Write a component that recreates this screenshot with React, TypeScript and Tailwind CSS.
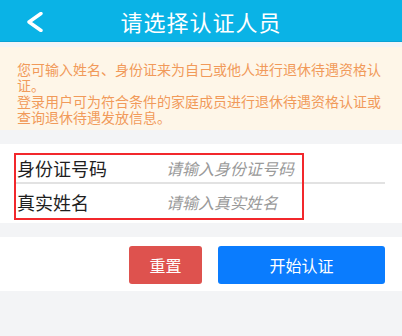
import React from "react";

export default function App() {
  const font = { fontFamily: '"Noto Sans CJK SC", "Noto Sans", sans-serif' };
  return (
    <div className="w-[402px] h-[336px] bg-[#f3f4f6] overflow-hidden" style={font}>
      <div className="relative h-[42px] bg-[#0ab3e6] border-b border-[#0aa2d4] flex items-center justify-center">
        <svg className="absolute left-[25px] top-[12px]" width="20" height="20" viewBox="0 0 20 20" fill="none">
          <path d="M16 1.5 L4 10 L16 18.5" stroke="white" strokeWidth="3.4" strokeLinecap="round" strokeLinejoin="round" />
        </svg>
        <span className="text-white text-[22px] leading-none tracking-[1px]">请选择认证人员</span>
      </div>
      <div className="h-[5px]" />
      <div className="bg-[#fef6e8] pt-[14px] pb-[5px] pl-[17px] pr-[10px] text-[14px] leading-[16px] text-[#f19a5a]">
        <p>您可输入姓名、身份证来为自己或他人进行退休待遇资格认证。</p>
        <p>登录用户可为符合条件的家庭成员进行退休待遇资格认证或查询退休待遇发放信息。</p>
      </div>
      <div className="h-[14px]" />
      <div className="relative bg-white pt-[9px] pb-[3px]">
        <div className="flex items-center h-[29px] pl-[17px]">
          <span className="w-[149px] text-[18px] text-[#1f1f1f] leading-none">身份证号码</span>
          <span className="text-[16px] italic text-[#9a9a9a] leading-none">请输入身份证号码</span>
        </div>
        <div className="h-[2px] bg-[#e2e2e2] ml-[14px] mr-[17px]" />
        <div className="flex items-center h-[36px] pl-[17px]">
          <span className="w-[149px] text-[18px] text-[#1f1f1f] leading-none">真实姓名</span>
          <span className="text-[16px] italic text-[#9a9a9a] leading-none">请输入真实姓名</span>
        </div>
        <div className="absolute left-[14px] top-[9px] w-[290px] h-[67px] border-2 border-[#f2282c]" />
      </div>
      <div className="h-[14px]" />
      <div className="bg-white h-[54px] pt-[9px] pr-[17px] flex justify-end gap-[16px]">
        <button className="w-[73px] h-[38px] rounded-[3px] bg-[#de524e] text-white text-[16px] leading-none">重置</button>
        <button className="w-[167px] h-[38px] rounded-[3px] bg-[#0a7cfe] text-white text-[16px] leading-none">开始认证</button>
      </div>
    </div>
  );
}
